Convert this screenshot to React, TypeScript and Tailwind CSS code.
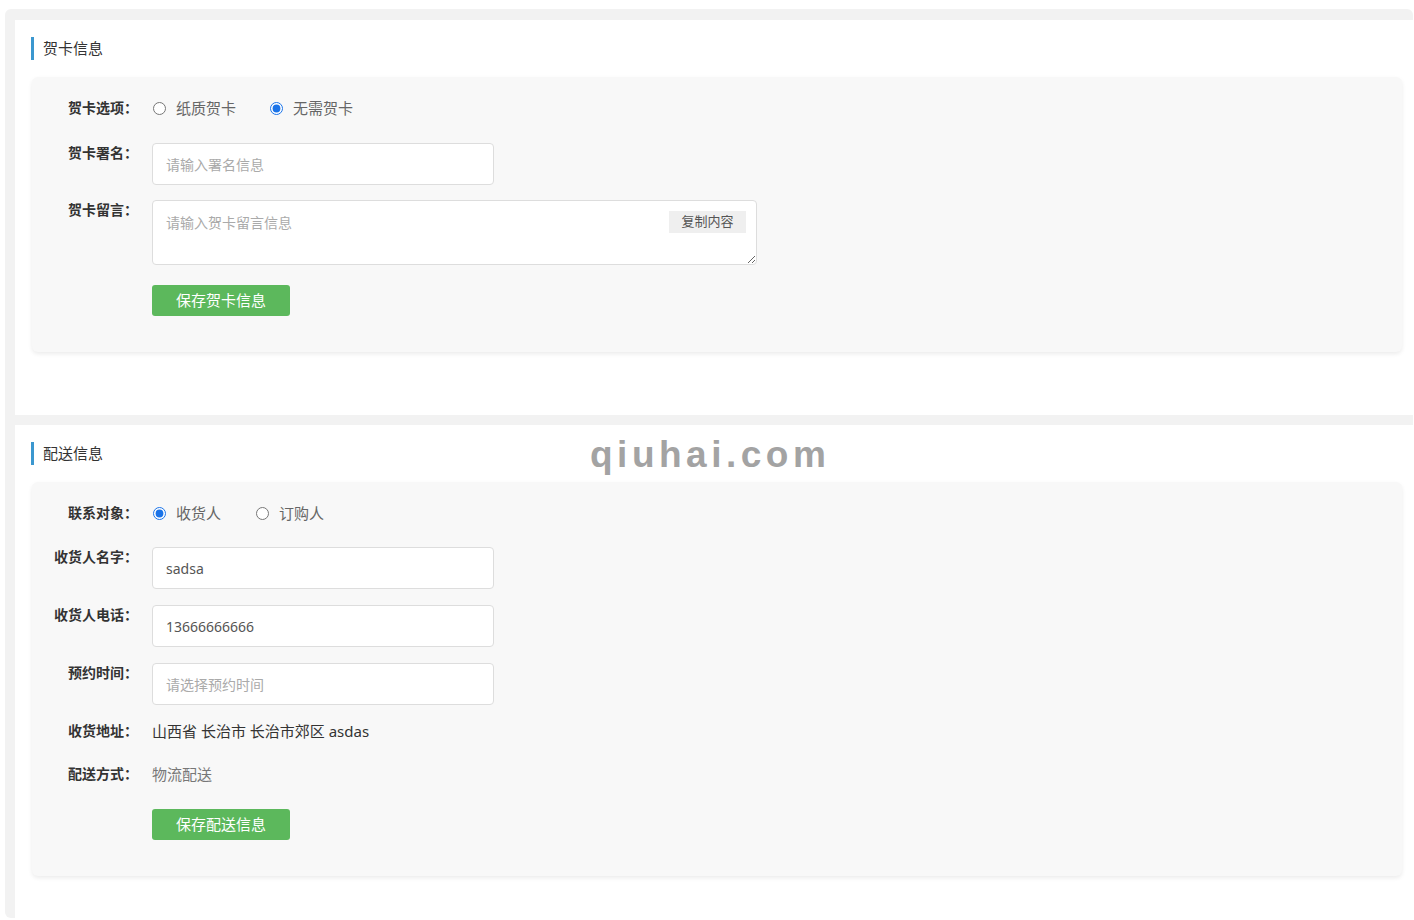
import React from 'react';

const font = { fontFamily: '"Noto Sans", "Noto Sans CJK SC", sans-serif' };

const SectionTitle: React.FC<{ title: string }> = ({ title }) => (
  <div className="flex items-center h-[23px] ml-[16px]">
    <div className="w-[3px] h-[23px] bg-[#3b97cf]" />
    <span className="ml-[9px] text-[15px] text-[#333]">{title}</span>
  </div>
);

const Label: React.FC<{ text: string }> = ({ text }) => (
  <div className="w-[106px] shrink-0 text-right text-[14px] leading-5 font-bold text-[#333]">{text}</div>
);

const Radio: React.FC<{ label: string; checked?: boolean; name: string; className?: string }> = ({ label, checked, name, className }) => (
  <label className={`flex items-center ${className ?? ''}`}>
    <input type="radio" name={name} defaultChecked={checked} className="m-0 w-[13px] h-[13px] accent-[#1a73e8]" />
    <span className="ml-[10px] text-[15px] leading-5 text-[#666]">{label}</span>
  </label>
);

const TextInput: React.FC<{ value?: string; placeholder?: string }> = ({ value, placeholder }) => (
  <input
    type="text"
    defaultValue={value}
    placeholder={placeholder}
    className="ml-[14px] w-[342px] h-[42px] bg-white border border-[#ddd] rounded-[4px] px-[13px] text-[14px] text-[#555] placeholder:text-[#aaa] outline-none"
  />
);

const SaveButton: React.FC<{ text: string }> = ({ text }) => (
  <div className="pl-[120px]">
    <button className="w-[138px] h-[31px] bg-[#5cb85c] rounded-[3px] text-white text-[15px]">{text}</button>
  </div>
);

const Panel: React.FC<{ children: React.ReactNode }> = ({ children }) => (
  <div className="ml-[17px] w-[1370px] bg-[#f8f8f8] rounded-[6px] shadow-[0_2px_4px_rgba(0,0,0,0.08)] pt-[21px] pb-[36px]">
    {children}
  </div>
);

export default function App() {
  return (
    <div className="w-full h-[920px] overflow-hidden bg-white relative" style={font}>
      <div className="ml-[5px] mt-[9px] w-[1408px] h-[909px] bg-[#f2f2f2] rounded-[6px] pl-[10px] pt-[11px]">
        {/* 贺卡信息 */}
        <div className="w-[1399px] h-[395px] bg-white pt-[17px]">
          <SectionTitle title="贺卡信息" />
          <div className="mt-[17px]">
            <Panel>
              <div className="flex items-center">
                <Label text="贺卡选项：" />
                <div className="ml-[15px] flex items-center">
                  <Radio name="card" label="纸质贺卡" />
                  <Radio name="card" label="无需贺卡" checked className="ml-[34px]" />
                </div>
              </div>
              <div className="flex items-start mt-[25px]">
                <Label text="贺卡署名：" />
                <TextInput placeholder="请输入署名信息" />
              </div>
              <div className="flex items-start mt-[15px]">
                <Label text="贺卡留言：" />
                <div className="relative ml-[14px]">
                  <textarea
                    placeholder="请输入贺卡留言信息"
                    className="block w-[605px] h-[65px] bg-white border border-[#ddd] rounded-[4px] px-[13px] py-[12px] text-[14px] leading-5 text-[#555] placeholder:text-[#aaa] outline-none"
                  />
                  <button className="absolute top-[11px] right-[11px] w-[77px] h-[22px] bg-[#efefef] text-[13px] text-[#555]">复制内容</button>
                </div>
              </div>
              <div className="mt-[20px]">
                <SaveButton text="保存贺卡信息" />
              </div>
            </Panel>
          </div>
        </div>

        {/* 配送信息 */}
        <div className="w-[1399px] h-[500px] bg-white pt-[17px] mt-[10px]">
          <SectionTitle title="配送信息" />
          <div className="mt-[17px]">
            <Panel>
              <div className="flex items-center">
                <Label text="联系对象：" />
                <div className="ml-[15px] flex items-center">
                  <Radio name="contact" label="收货人" checked />
                  <Radio name="contact" label="订购人" className="ml-[35px]" />
                </div>
              </div>
              <div className="flex items-start mt-[24px]">
                <Label text="收货人名字：" />
                <TextInput value="sadsa" />
              </div>
              <div className="flex items-start mt-[16px]">
                <Label text="收货人电话：" />
                <TextInput value="13666666666" />
              </div>
              <div className="flex items-start mt-[16px]">
                <Label text="预约时间：" />
                <TextInput placeholder="请选择预约时间" />
              </div>
              <div className="flex items-start mt-[16px]">
                <Label text="收货地址：" />
                <span className="ml-[14px] text-[15px] leading-5 text-[#333]">山西省 长治市 长治市郊区 asdas</span>
              </div>
              <div className="flex items-start mt-[23px]">
                <Label text="配送方式：" />
                <span className="ml-[14px] text-[15px] leading-5 text-[#777]">物流配送</span>
              </div>
              <div className="mt-[25px]">
                <SaveButton text="保存配送信息" />
              </div>
            </Panel>
          </div>
        </div>
      </div>

      <div
        className="absolute left-[590px] top-[436px] text-[37px] font-bold text-[#a3a3a3] tracking-[4.5px] leading-none"
        style={{ fontFamily: '"Liberation Sans", sans-serif' }}
      >
        qiuhai.com
      </div>
    </div>
  );
}
